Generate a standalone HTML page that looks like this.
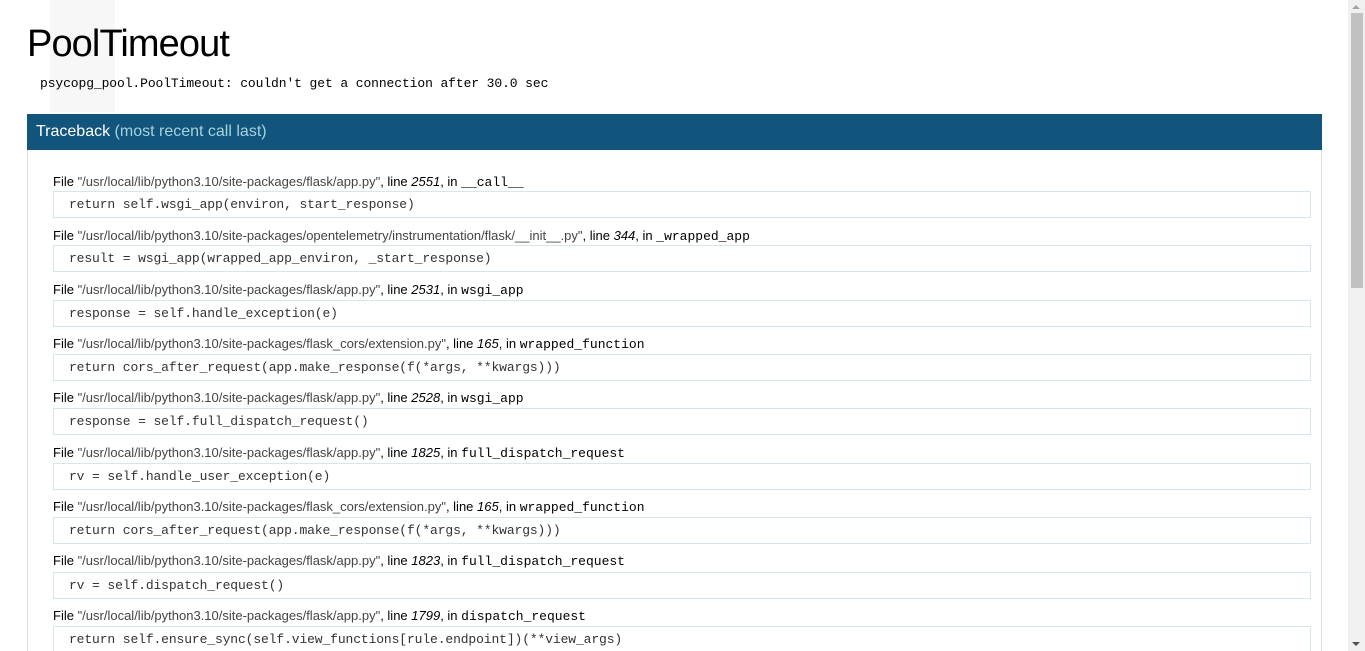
<!DOCTYPE html>
<html><head><meta charset="utf-8"><style>
html,body{margin:0;padding:0;background:#fff;overflow:hidden}
body{width:1365px;height:651px;position:relative;font-family:"Liberation Sans",Arial,sans-serif;font-size:13px;color:#000}
.ghost{position:absolute;left:50px;top:0;width:65px;height:112px;background:#f7f7f7}
h1{position:absolute;left:27px;top:22px;margin:0;font-size:38px;font-weight:normal;line-height:44px;letter-spacing:-0.9px}
.msg{position:absolute;left:40px;top:76px;font-family:"Liberation Mono",monospace;font-size:13px;line-height:16px;color:#000;letter-spacing:-0.1px}
.hdr{position:absolute;left:27px;top:114px;width:1295px;height:36px;background:#11557c;color:#fff;font-size:16px;line-height:35px;box-sizing:border-box;padding-left:9px}
.hdr span{color:#a7d1dd}
.box{position:absolute;left:27px;top:150px;width:1295px;height:520px;border:1px solid #ddd;border-top:none;box-sizing:border-box}
.fl{position:absolute;left:53px;font-size:13px;line-height:16px;white-space:nowrap;top:0}
.fl .p{color:#444}
.fl code{font-family:"Liberation Mono",monospace;font-size:13px}
.cd{position:absolute;left:53px;width:1258px;height:27px;border:1px solid #d5e7ea;box-sizing:border-box;font-family:"Liberation Mono",monospace;font-size:13px;color:#333;line-height:26px;padding-left:15px;white-space:pre;letter-spacing:-0.12px}
.sb{position:absolute;left:1348px;top:0;width:17px;height:651px;background:#f0f0f0}
.th{position:absolute;left:1351px;top:13px;width:12px;height:275px;background:#c1c1c1}
.up{position:absolute;left:1352px;top:5px;width:0;height:0;border-left:4px solid transparent;border-right:4px solid transparent;border-bottom:4px solid #a3a3a3}
.dn{position:absolute;left:1352px;top:642px;width:0;height:0;border-left:4px solid transparent;border-right:4px solid transparent;border-top:4px solid #505050}
</style></head><body>
<div class="ghost"></div>
<h1>PoolTimeout</h1>
<div class="msg">psycopg_pool.PoolTimeout: couldn't get a connection after 30.0 sec</div>
<div class="hdr">Traceback <span>(most recent call last)</span></div>
<div class="box"></div>

<div class="fl" style="top:174px">File <span class="p">"/usr/local/lib/python3.10/site-packages/flask/app.py"</span>, line <i>2551</i>, in <code>__call__</code></div>
<div class="cd" style="top:191px">return self.wsgi_app(environ, start_response)</div>

<div class="fl" style="top:228px">File <span class="p">"/usr/local/lib/python3.10/site-packages/opentelemetry/instrumentation/flask/__init__.py"</span>, line <i>344</i>, in <code>_wrapped_app</code></div>
<div class="cd" style="top:245px">result = wsgi_app(wrapped_app_environ, _start_response)</div>

<div class="fl" style="top:282px">File <span class="p">"/usr/local/lib/python3.10/site-packages/flask/app.py"</span>, line <i>2531</i>, in <code>wsgi_app</code></div>
<div class="cd" style="top:300px">response = self.handle_exception(e)</div>

<div class="fl" style="top:336px">File <span class="p">"/usr/local/lib/python3.10/site-packages/flask_cors/extension.py"</span>, line <i>165</i>, in <code>wrapped_function</code></div>
<div class="cd" style="top:354px">return cors_after_request(app.make_response(f(*args, **kwargs)))</div>

<div class="fl" style="top:390px">File <span class="p">"/usr/local/lib/python3.10/site-packages/flask/app.py"</span>, line <i>2528</i>, in <code>wsgi_app</code></div>
<div class="cd" style="top:408px">response = self.full_dispatch_request()</div>

<div class="fl" style="top:445px">File <span class="p">"/usr/local/lib/python3.10/site-packages/flask/app.py"</span>, line <i>1825</i>, in <code>full_dispatch_request</code></div>
<div class="cd" style="top:463px">rv = self.handle_user_exception(e)</div>

<div class="fl" style="top:499px">File <span class="p">"/usr/local/lib/python3.10/site-packages/flask_cors/extension.py"</span>, line <i>165</i>, in <code>wrapped_function</code></div>
<div class="cd" style="top:517px">return cors_after_request(app.make_response(f(*args, **kwargs)))</div>

<div class="fl" style="top:553px">File <span class="p">"/usr/local/lib/python3.10/site-packages/flask/app.py"</span>, line <i>1823</i>, in <code>full_dispatch_request</code></div>
<div class="cd" style="top:572px">rv = self.dispatch_request()</div>

<div class="fl" style="top:608px">File <span class="p">"/usr/local/lib/python3.10/site-packages/flask/app.py"</span>, line <i>1799</i>, in <code>dispatch_request</code></div>
<div class="cd" style="top:626px">return self.ensure_sync(self.view_functions[rule.endpoint])(**view_args)</div>

<div class="sb"></div><div class="th"></div><div class="up"></div><div class="dn"></div>
</body></html>
